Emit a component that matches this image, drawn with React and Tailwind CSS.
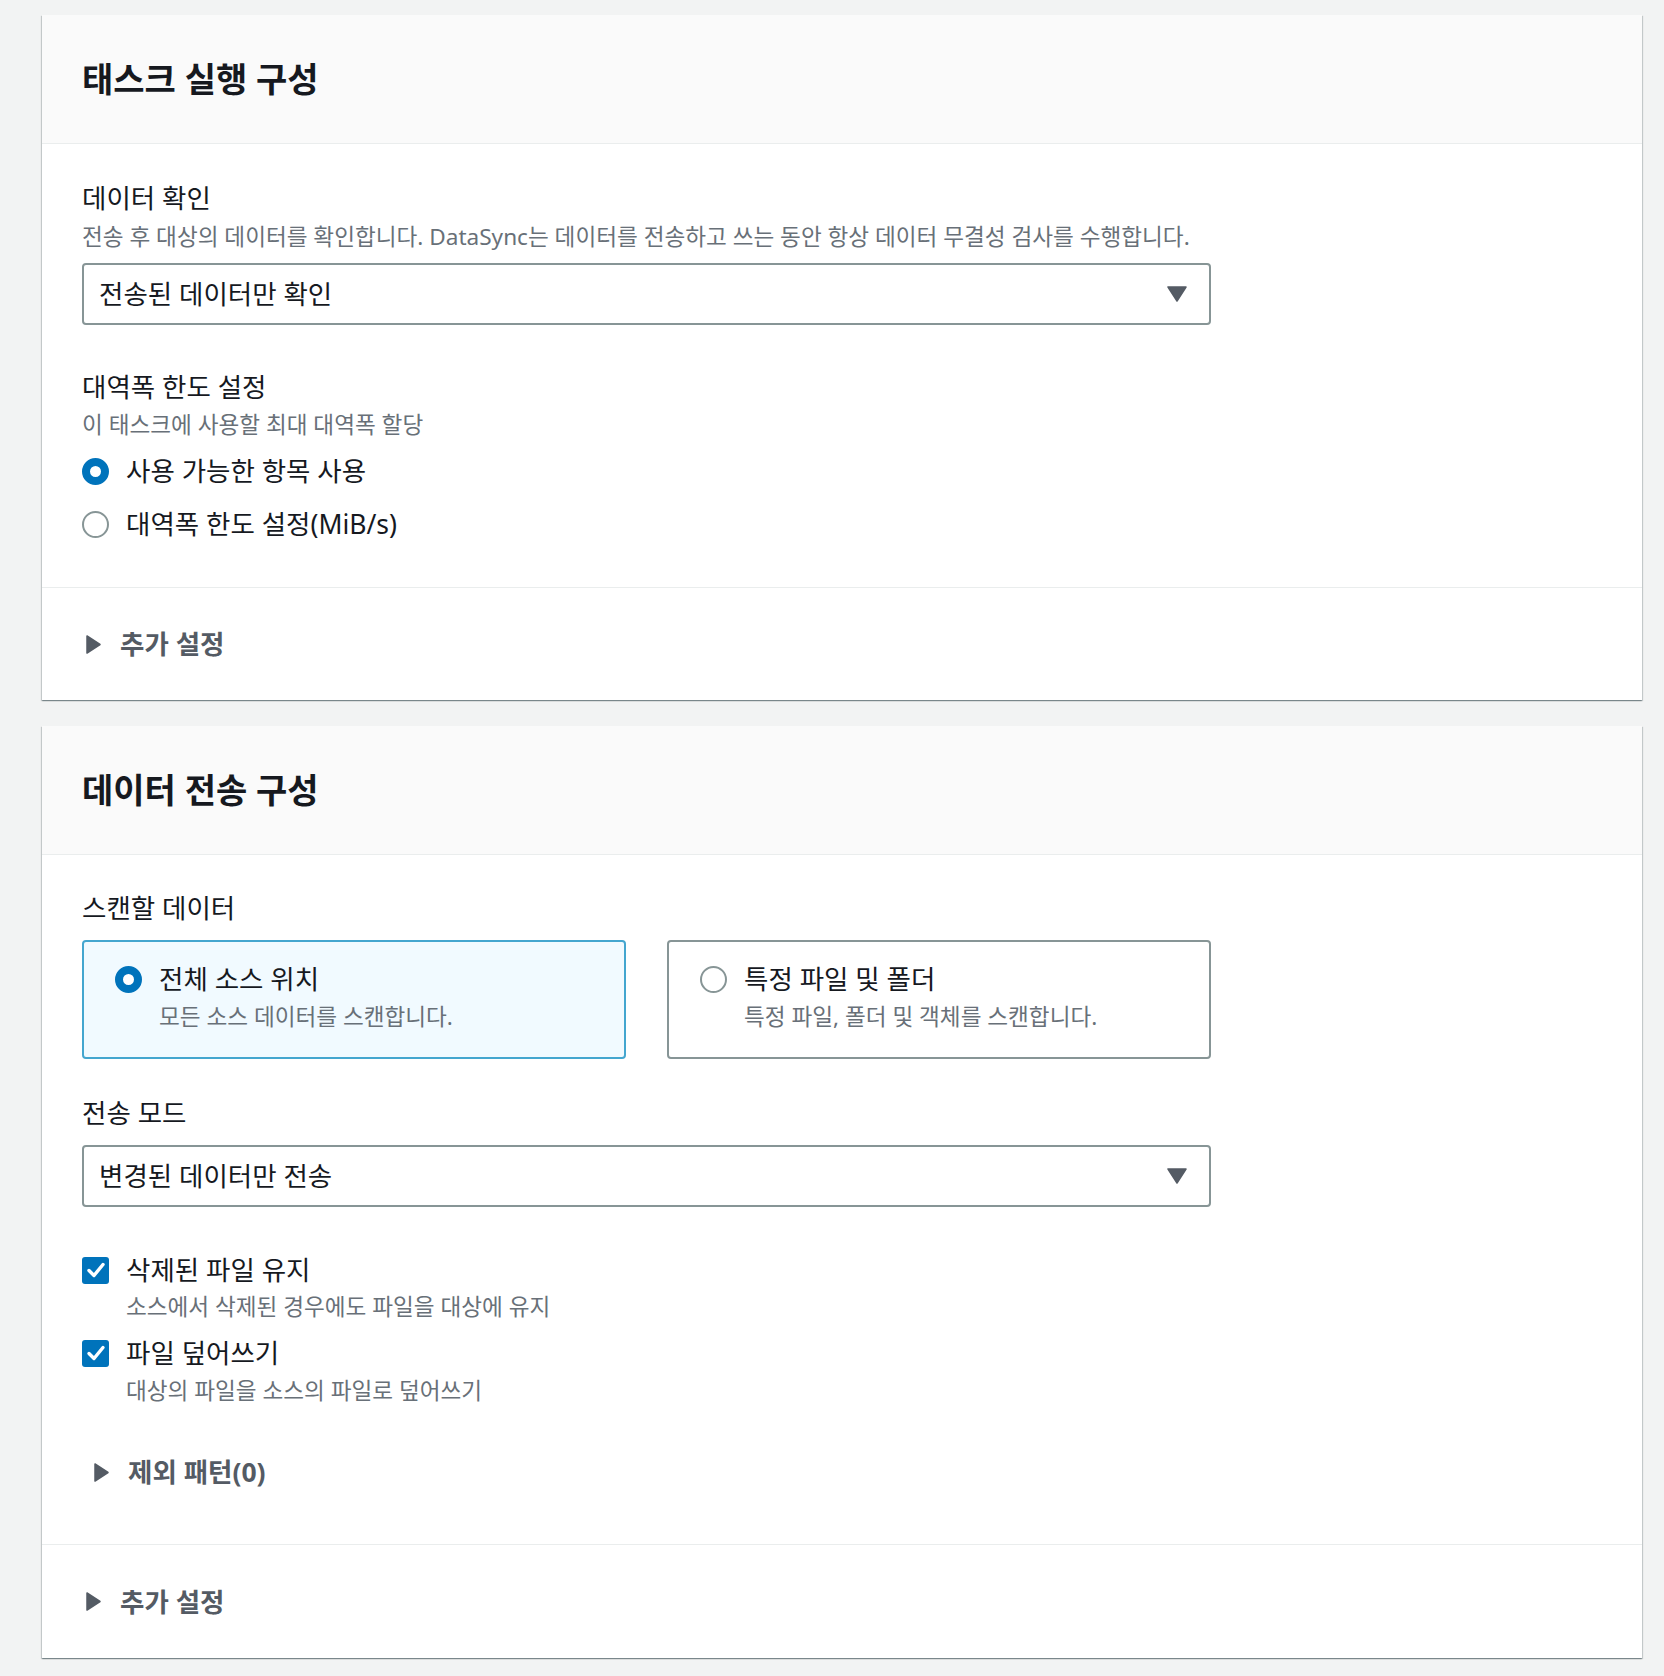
import React from "react";

const FONT = { fontFamily: '"Noto Sans", "Noto Sans CJK KR", sans-serif' };

function RadioOn() {
  return <span className="block w-[27px] h-[27px] rounded-full border-[8px] border-[#0073bb] bg-white shrink-0" />;
}
function RadioOff() {
  return <span className="block w-[27px] h-[27px] rounded-full border-2 border-[#879596] bg-white shrink-0" />;
}
function Checkbox() {
  return (
    <span className="flex items-center justify-center w-[27px] h-[27px] rounded-[3px] bg-[#0073bb] shrink-0">
      <svg width="20" height="18" viewBox="0 0 20 18" fill="none">
        <polyline points="3,9.5 8,14.5 17,3.5" stroke="white" strokeWidth="3.4" strokeLinecap="round" strokeLinejoin="round" />
      </svg>
    </span>
  );
}
function CaretRight() {
  return (
    <svg width="17" height="21" viewBox="0 0 17 21" className="shrink-0">
      <path d="M2 2 L15 10.5 L2 19 Z" fill="#545b64" stroke="#545b64" strokeWidth="1.5" strokeLinejoin="round" />
    </svg>
  );
}
function CaretDown() {
  return (
    <svg width="22" height="18" viewBox="0 0 22 18" className="shrink-0">
      <path d="M2 2 L20 2 L11 16 Z" fill="#545b64" stroke="#545b64" strokeWidth="1.5" strokeLinejoin="round" />
    </svg>
  );
}
function Select({ value }) {
  return (
    <div className="w-[1129px] h-[62px] border-2 border-[#879596] rounded-[4px] bg-white flex items-center justify-between pl-[15px] pr-[21px]">
      <span className="text-[26.5px] leading-[32px] text-[#16191f]">{value}</span>
      <CaretDown />
    </div>
  );
}
function CardHeader({ title }) {
  return (
    <div className="h-[129px] bg-[#fafafa] border-b border-[#eaeded] flex items-center px-[40px]">
      <h2 className="text-[34px] leading-[40px] font-bold text-[#16191f]">{title}</h2>
    </div>
  );
}
function Expander({ label, indent }) {
  return (
    <div className={`flex items-center gap-[18px] h-[40px] ${indent ? "pl-[11px]" : "pl-[3px]"}`}>
      <CaretRight />
      <span className="text-[26.5px] leading-[32px] font-bold text-[#545b64]">{label}</span>
    </div>
  );
}

const cardCls =
  "w-[1600px] bg-white shadow-[0_1px_1px_0_rgba(0,28,36,0.3),1px_1px_1px_0_rgba(0,28,36,0.15),-1px_1px_1px_0_rgba(0,28,36,0.15)]";

const LABEL = "text-[26.5px] leading-[32px] text-[#16191f]";
const DESC = "text-[22.6px] leading-[28px] text-[#687078]";

export default function App() {
  return (
    <div className="min-h-[1676px] bg-[#f2f3f3] pt-[15px] pl-[42px] pb-[18px] flex flex-col gap-[26px]" style={FONT}>
      {/* Card 1 */}
      <div className={cardCls}>
        <CardHeader title="태스크 실행 구성" />
        <div className="px-[40px] pt-[38px] pb-[43px] border-b border-[#eaeded]">
          <div className={LABEL}>데이터 확인</div>
          <div className={`mt-[9px] ${DESC}`}>
            전송 후 대상의 데이터를 확인합니다. DataSync는 데이터를 전송하고 쓰는 동안 항상 데이터 무결성 검사를 수행합니다.
          </div>
          <div className="mt-[12px]">
            <Select value="전송된 데이터만 확인" />
          </div>
          <div className={`mt-[46px] ${LABEL}`}>대역폭 한도 설정</div>
          <div className={`mt-[8px] ${DESC}`}>이 태스크에 사용할 최대 대역폭 할당</div>
          <div className="mt-[12px] flex flex-col gap-[13px]">
            <div className="flex items-center gap-[17px] h-[40px]">
              <RadioOn />
              <span className={LABEL}>사용 가능한 항목 사용</span>
            </div>
            <div className="flex items-center gap-[17px] h-[40px]">
              <RadioOff />
              <span className={LABEL}>대역폭 한도 설정(MiB/s)</span>
            </div>
          </div>
        </div>
        <div className="h-[112px] flex items-center px-[40px]">
          <Expander label="추가 설정" />
        </div>
      </div>

      {/* Card 2 */}
      <div className={cardCls}>
        <CardHeader title="데이터 전송 구성" />
        <div className="px-[40px] pt-[37px] pb-[52px] border-b border-[#eaeded]">
          <div className={LABEL}>스캔할 데이터</div>
          <div className="mt-[16px] flex gap-[41px]">
            <div className="w-[544px] h-[119px] border-2 border-[#44a6cf] rounded-[4px] bg-[#f1faff] pl-[31px] pt-[21px] flex gap-[17px]">
              <div className="h-[32px] flex items-center">
                <RadioOn />
              </div>
              <div className="flex flex-col">
                <span className={LABEL}>전체 소스 위치</span>
                <span className={`mt-[8px] ${DESC}`}>모든 소스 데이터를 스캔합니다.</span>
              </div>
            </div>
            <div className="w-[544px] h-[119px] border-2 border-[#879596] rounded-[4px] bg-white pl-[31px] pt-[21px] flex gap-[17px]">
              <div className="h-[32px] flex items-center">
                <RadioOff />
              </div>
              <div className="flex flex-col">
                <span className={LABEL}>특정 파일 및 폴더</span>
                <span className={`mt-[8px] ${DESC}`}>특정 파일, 폴더 및 객체를 스캔합니다.</span>
              </div>
            </div>
          </div>
          <div className={`mt-[38px] ${LABEL}`}>전송 모드</div>
          <div className="mt-[16px]">
            <Select value="변경된 데이터만 전송" />
          </div>
          <div className="mt-[43px]">
            <div className="flex items-center gap-[17px] h-[40px]">
              <Checkbox />
              <span className={LABEL}>삭제된 파일 유지</span>
            </div>
            <div className={`mt-[3px] pl-[44px] ${DESC}`}>소스에서 삭제된 경우에도 파일을 대상에 유지</div>
          </div>
          <div className="mt-[12px]">
            <div className="flex items-center gap-[17px] h-[40px]">
              <Checkbox />
              <span className={LABEL}>파일 덮어쓰기</span>
            </div>
            <div className={`mt-[4px] pl-[44px] ${DESC}`}>대상의 파일을 소스의 파일로 덮어쓰기</div>
          </div>
          <div className="mt-[47px]">
            <Expander label="제외 패턴(0)" indent />
          </div>
        </div>
        <div className="h-[113px] flex items-center px-[40px]">
          <Expander label="추가 설정" />
        </div>
      </div>
    </div>
  );
}
